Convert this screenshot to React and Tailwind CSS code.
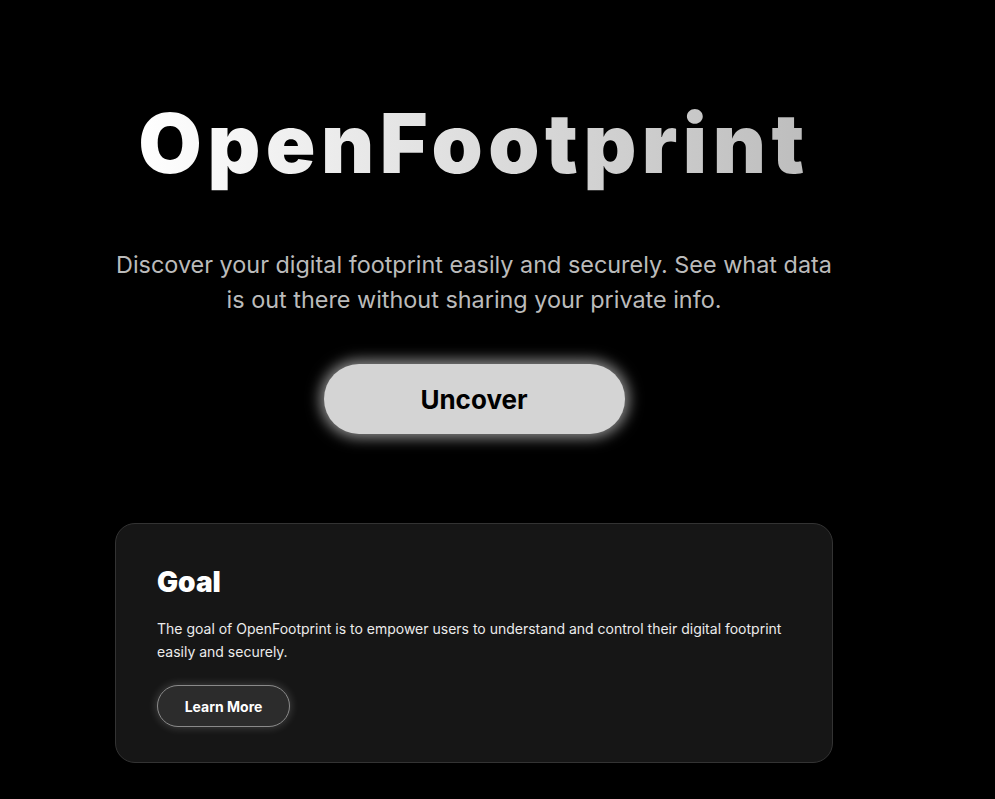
export default function App() {
  return (
    <div className="min-h-[799px] w-full bg-black font-['Inter',sans-serif]">
      <div className="ml-[115px] flex w-[718px] flex-col items-center">
        {/* Hero */}
        <h1 className="mt-[84px] bg-gradient-to-r from-white to-[#bdbdbd] bg-clip-text text-[82px] font-black leading-[120px] tracking-[5.5px] text-transparent">
          OpenFootprint
        </h1>
        <p className="mt-[43px] w-[718px] text-center text-[23.4px] leading-[35px] text-[#bbbbbb]">
          Discover your digital footprint easily and securely. See what data is out there without sharing your private info.
        </p>
        <button className="mt-[47px] h-[70px] w-[301px] rounded-full bg-[#d4d4d4] text-[26px] font-bold text-black shadow-[0_0_14px_4px_rgba(255,255,255,0.55)]">
          Uncover
        </button>

        {/* Goal card */}
        <div className="mt-[89px] w-[718px] rounded-[20px] border border-[#333] bg-[#161616] px-[41px] pb-[35px] pt-[40px]">
          <h2 className="text-[28px] font-black leading-[36px] text-white">Goal</h2>
          <p className="mt-[17px] text-[14px] leading-[23px] text-[#ececec]">
            The goal of OpenFootprint is to empower users to understand and control their digital footprint easily and securely.
          </p>
          <button className="mt-[22px] h-[42px] w-[133px] rounded-full border border-[#8a8a8a] bg-[#2c2c2c] text-[14px] font-bold text-white shadow-[0_0_8px_1px_rgba(255,255,255,0.18)]">
            Learn More
          </button>
        </div>
      </div>
    </div>
  )
}
